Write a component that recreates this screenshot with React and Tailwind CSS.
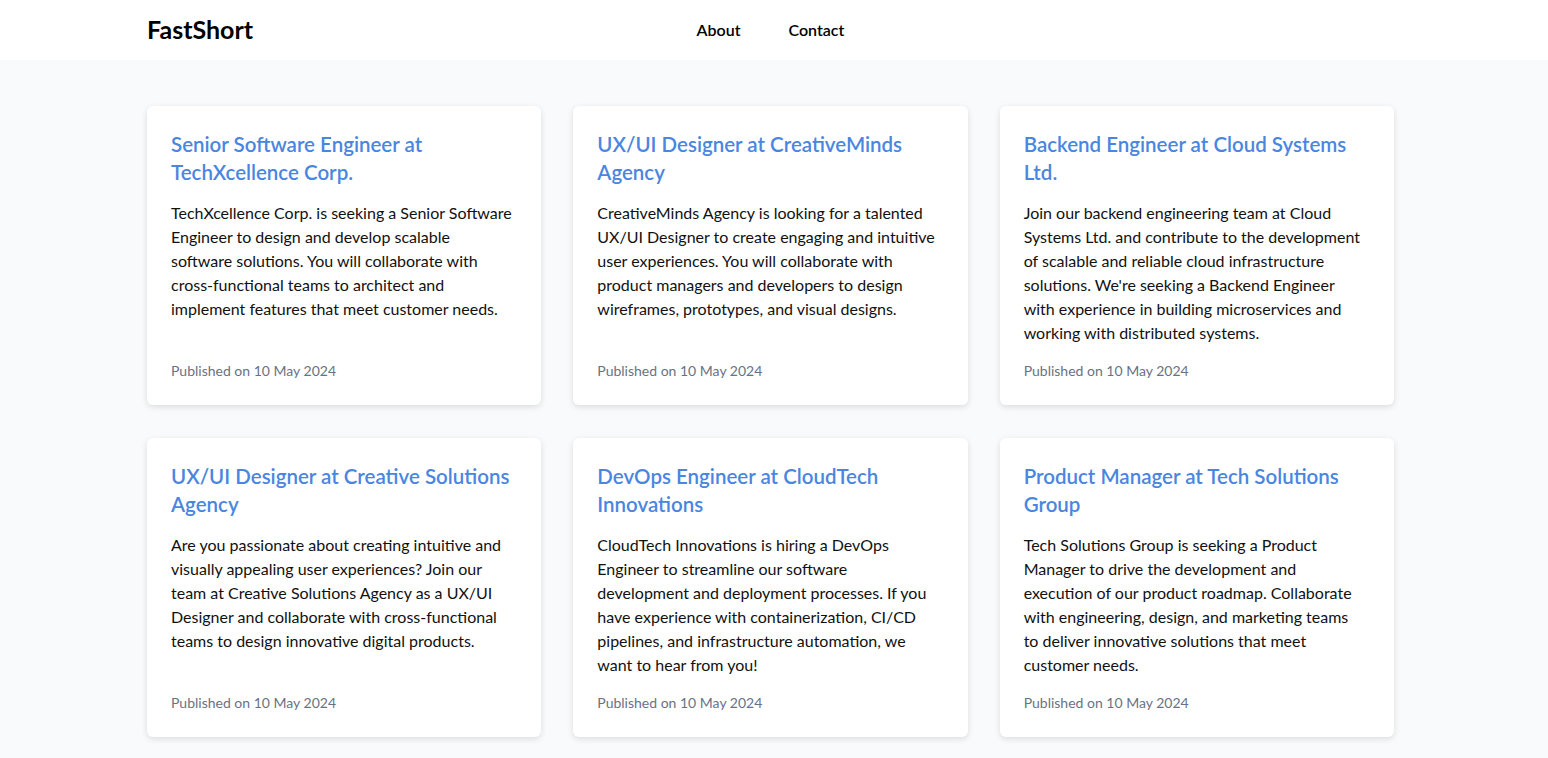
const jobs = [
  {
    title: 'Senior Software Engineer at TechXcellence Corp.',
    lines: [
      'TechXcellence Corp. is seeking a Senior Software',
      'Engineer to design and develop scalable',
      'software solutions. You will collaborate with',
      'cross-functional teams to architect and',
      'implement features that meet customer needs.',
    ],
  },
  {
    title: 'UX/UI Designer at CreativeMinds Agency',
    lines: [
      'CreativeMinds Agency is looking for a talented',
      'UX/UI Designer to create engaging and intuitive',
      'user experiences. You will collaborate with',
      'product managers and developers to design',
      'wireframes, prototypes, and visual designs.',
    ],
  },
  {
    title: 'Backend Engineer at Cloud Systems Ltd.',
    lines: [
      'Join our backend engineering team at Cloud',
      'Systems Ltd. and contribute to the development',
      'of scalable and reliable cloud infrastructure',
      "solutions. We're seeking a Backend Engineer",
      'with experience in building microservices and',
      'working with distributed systems.',
    ],
  },
  {
    title: 'UX/UI Designer at Creative Solutions Agency',
    lines: [
      'Are you passionate about creating intuitive and',
      'visually appealing user experiences? Join our',
      'team at Creative Solutions Agency as a UX/UI',
      'Designer and collaborate with cross-functional',
      'teams to design innovative digital products.',
    ],
  },
  {
    title: 'DevOps Engineer at CloudTech Innovations',
    lines: [
      'CloudTech Innovations is hiring a DevOps',
      'Engineer to streamline our software',
      'development and deployment processes. If you',
      'have experience with containerization, CI/CD',
      'pipelines, and infrastructure automation, we',
      'want to hear from you!',
    ],
  },
  {
    title: 'Product Manager at Tech Solutions Group',
    lines: [
      'Tech Solutions Group is seeking a Product',
      'Manager to drive the development and',
      'execution of our product roadmap. Collaborate',
      'with engineering, design, and marketing teams',
      'to deliver innovative solutions that meet',
      'customer needs.',
    ],
  },
];

function JobCard({ job }) {
  return (
    <div className="flex flex-col rounded-md bg-white p-6 shadow-[0_2px_6px_rgba(0,0,0,0.12)]">
      <h2 className="mb-[15px] text-[20.5px] font-semibold leading-7 text-[#4a86e0]">{job.title}</h2>
      <p className="text-base leading-6 text-[#111]">
        {job.lines.map((line, i) => (
          <span key={i} className="block whitespace-nowrap">
            {line}
          </span>
        ))}
      </p>
      <p className="mt-auto pt-4 text-sm leading-5 text-gray-500">Published on 10 May 2024</p>
    </div>
  );
}

export default function App() {
  return (
    <div className="min-h-screen bg-[#f8fafc] font-['Lato',sans-serif]">
      <header className="bg-white pr-[7px]">
        <div className="mx-auto grid h-[60px] max-w-[1247px] grid-cols-3 items-center">
          <div className="text-[25px] font-bold text-black">FastShort</div>
          <nav className="flex justify-center gap-12 text-base font-semibold text-black">
            <a href="#">About</a>
            <a href="#">Contact</a>
          </nav>
          <div />
        </div>
      </header>
      <main className="pr-[7px] pt-[46px] pb-8">
        <div className="mx-auto grid max-w-[1247px] grid-cols-3 gap-x-8 gap-y-[33px]">
          {jobs.map((job) => (
            <JobCard key={job.title} job={job} />
          ))}
        </div>
      </main>
    </div>
  );
}
